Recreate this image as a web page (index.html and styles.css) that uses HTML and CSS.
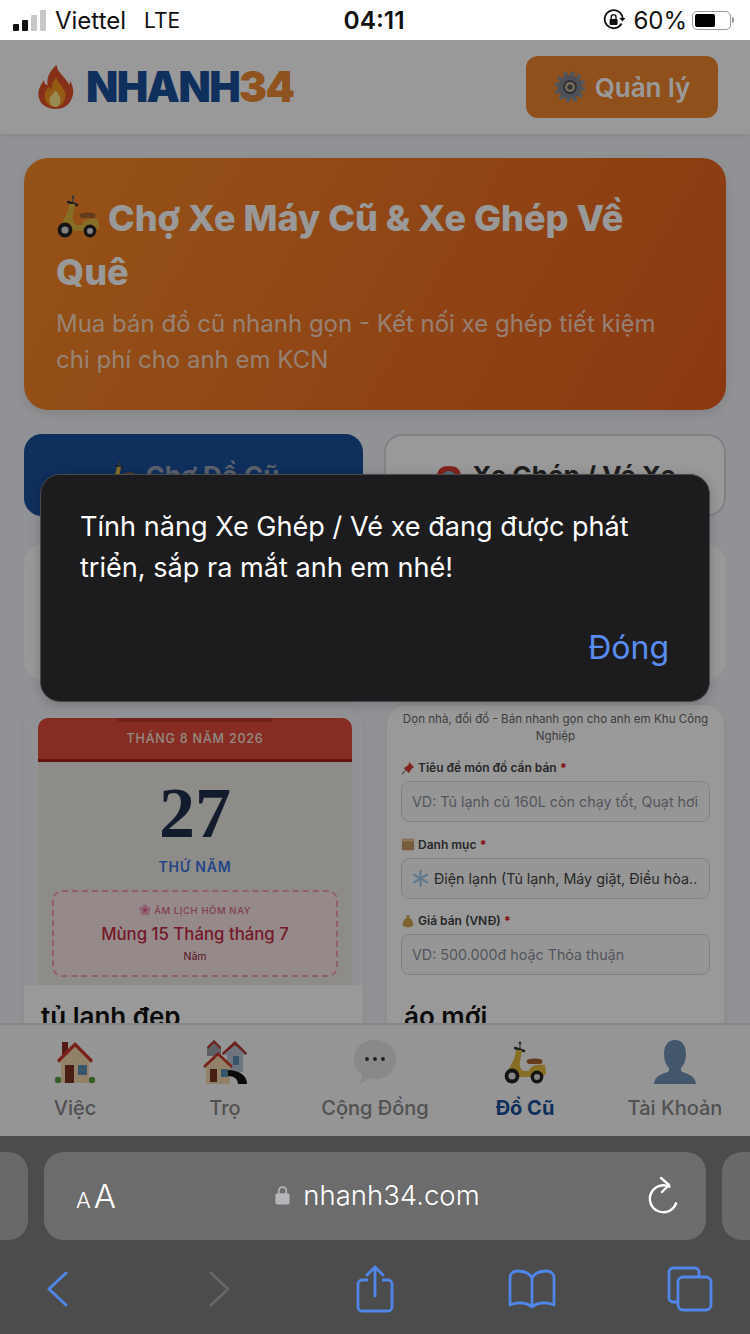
FILE: index.html
```html
<!DOCTYPE html>
<html lang="vi">
<head>
    <meta charset="UTF-8">
    <title>Nhanh34 - Đồ Cũ</title>
    <link rel="stylesheet" href="styles.css">
</head>
<body>
    <svg class="icon-defs" xmlns="http://www.w3.org/2000/svg">
        <symbol id="scooter" viewBox="0 0 44 44">
            <path d="M17 3v6" stroke="#666" stroke-width="1.3"/>
            <circle cx="17" cy="3" r="1.4" fill="#555"/>
            <path d="M12 8l9 3" stroke="#333" stroke-width="2.4" stroke-linecap="round"/>
            <path d="M13 10h6l-2 12c-1 4 1 9 5 9h4c1-4 5-7 16-6l1 9-5 3H14c0-4-2-8-8-8 2-5 6-9 7-19z" fill="#e2b83e"/>
            <path d="M24 20c4-2 12-2 15 0 1 2 0 4-2 4H27c-3 0-4-2-3-4z" fill="#a5622e"/>
            <circle cx="9" cy="36" r="7.4" fill="#222"/>
            <circle cx="9" cy="36" r="3.6" fill="#ddd"/>
            <circle cx="34" cy="37" r="6.4" fill="#222"/>
            <circle cx="34" cy="37" r="3" fill="#ddd"/>
        </symbol>
        <symbol id="house" viewBox="0 0 44 44">
            <rect x="9" y="2" width="6" height="13" fill="#8d2c22"/>
            <rect x="8" y="19" width="28" height="24" fill="#f0d8ae"/>
            <path d="M22 2L4 20l2 3L22 7l16 16 2-3z" fill="#c93a2c"/>
            <path d="M22 7L8 21v4h28v-4z" fill="#f0d8ae"/>
            <rect x="12" y="25" width="9" height="18" fill="#7a3422"/>
            <rect x="25" y="25" width="9" height="10" fill="#5d8fb5"/>
            <circle cx="5" cy="40" r="3.2" fill="#5d9a3c"/>
            <circle cx="39" cy="40" r="3.2" fill="#5d9a3c"/>
        </symbol>
        <symbol id="houses" viewBox="0 0 44 44">
            <path d="M32 1L19 13l1 2h4v17h16V15h3l1-2z" fill="#b9c4d2"/>
            <path d="M32 1L19 13l1 2L32 5l11 10 1-2z" fill="#b5382c"/>
            <rect x="30" y="16" width="6" height="9" fill="#5d8fb5"/>
            <path d="M11 0L4 7v9h14V7z" fill="#9aa0a8"/>
            <path d="M11 0L4 7l1 2 6-6 6 6 1-2z" fill="#b5382c"/>
            <rect x="3" y="22" width="24" height="22" fill="#f0d8ae"/>
            <path d="M15 12L0 26l2 2L15 16l13 12 2-2z" fill="#c93a2c"/>
            <path d="M15 16L3 27v4h24v-4z" fill="#f0d8ae"/>
            <rect x="7" y="29" width="7" height="13" fill="#7a3422"/>
            <rect x="18" y="29" width="7" height="8" fill="#5d8fb5"/>
            <path d="M25 30c10 0 19 5 19 14h-9c0-5-4-8-10-8z" fill="#111"/>
        </symbol>
        <symbol id="bubble" viewBox="0 0 44 44">
            <path d="M22 0c12 0 21 8 21 19 0 12-9 20-21 20-2 0-4 0-6-1-3 3-6 5-10 6 2-3 3-6 3-9C4 31 1 26 1 19 1 8 10 0 22 0z" fill="#e4e4e4"/>
            <circle cx="14" cy="19" r="1.9" fill="#333"/>
            <circle cx="22" cy="19" r="1.9" fill="#333"/>
            <circle cx="30" cy="19" r="1.9" fill="#333"/>
        </symbol>
        <symbol id="person" viewBox="0 0 44 44">
            <path d="M22 0c8 0 11 7 11 14 0 6-2 11-5 14v3c4 3 14 3 15 13H1c1-10 11-10 15-13v-3c-3-3-5-8-5-14C11 7 14 0 22 0z" fill="#6f90b5"/>
        </symbol>
        <symbol id="flower" viewBox="0 0 20 20">
            <circle cx="10" cy="4.5" r="4" fill="#f3a3c4"/>
            <circle cx="15.5" cy="8.5" r="4" fill="#f3a3c4"/>
            <circle cx="13.5" cy="15" r="4" fill="#f3a3c4"/>
            <circle cx="6.5" cy="15" r="4" fill="#f3a3c4"/>
            <circle cx="4.5" cy="8.5" r="4" fill="#f3a3c4"/>
            <circle cx="10" cy="10" r="3" fill="#d9607f"/>
        </symbol>
    </svg>

    <div class="status-bar">
        <div class="status-left">
            <span class="signal">
                <i class="bar on b1"></i><i class="bar on b2"></i><i class="bar b3"></i><i class="bar b4"></i>
            </span>
            <span>Viettel</span>
            <span class="network">LTE</span>
        </div>
        <div class="status-time">04:11</div>
        <div class="status-right">
            <svg class="rotate-lock" viewBox="0 0 22 22" width="22" height="22">
                <path d="M18.6 14.5A9 9 0 1 1 19.6 9" fill="none" stroke="#111" stroke-width="1.8"/>
                <path d="M16.2 9h6.2l-3 3.6z" fill="#111"/>
                <rect x="6.6" y="10" width="8" height="6" rx="1" fill="#111"/>
                <path d="M8.2 10V8a2.4 2.4 0 0 1 4.8 0v2" fill="none" stroke="#111" stroke-width="1.4"/>
            </svg>
            <span>60%</span>
            <span class="battery"><span class="battery-level"></span></span>
        </div>
    </div>

    <div class="webview">
        <header class="site-header">
            <div class="logo">
                <svg class="flame" viewBox="0 0 36 44" width="37" height="44">
                    <path d="M19 0c1 8 9 12 13 20 1-2 0-5 0-5 4 6 5 13 2 19-3 7-9 10-16 10C9 44 2 39 1 31c-1-7 3-11 5-16 1 3 2 5 4 5-1-8 3-15 9-20z" fill="#e2502b"/>
                    <path d="M19 12c1 6 7 10 9 16 1 7-4 14-10 14S7 38 7 31c0-4 3-7 4-10 1 2 2 3 3 3 0-5 2-9 5-12z" fill="#f7941f"/>
                    <path d="M18 25c2 3 5 6 5 10s-2 7-5 7-6-3-6-7 4-6 6-10z" fill="#fde68a"/>
                </svg>
                <span class="logo-text">NHANH<span class="logo-num">34</span></span>
            </div>
            <button class="manage-btn">
                <svg class="gear" viewBox="0 0 32 32" width="32" height="32">
                    <circle cx="16" cy="16" r="13.5" fill="none" stroke="#8a8f98" stroke-width="4" stroke-dasharray="4 3.07"/>
                    <circle cx="16" cy="16" r="12" fill="#80868f"/>
                    <circle cx="16" cy="16" r="7" fill="#4b5058"/>
                    <circle cx="16" cy="16" r="5" fill="#c9b99a"/>
                    <circle cx="16" cy="16" r="2.6" fill="#555"/>
                </svg>
                Quản lý
            </button>
        </header>

        <main class="content">
            <section class="hero">
                <h1 class="hero-title"><svg class="hero-icon"><use href="#scooter"/></svg> Chợ Xe Máy Cũ &amp; Xe Ghép Về Quê</h1>
                <p class="hero-sub">Mua bán đồ cũ nhanh gọn - Kết nối xe ghép tiết kiệm chi phí cho anh em KCN</p>
            </section>

            <div class="mode-tabs">
                <div class="mode-tab active"><svg class="mode-icon"><use href="#scooter"/></svg> Chợ Đồ Cũ</div>
                <div class="mode-tab">
                    <svg class="mode-icon" viewBox="0 -5 24 30">
                        <path d="M0 30V12C0 4 5 1 12 1s12 3 12 11v18z" fill="#d8392f"/>
                        <path d="M5 30V14c0-5 3-8 7-8s7 3 7 8v16z" fill="#7fb0cf"/>
                    </svg>
                    Xe Ghép / Vé Xe
                </div>
            </div>

            <div class="filter-card"></div>

            <div class="product-grid">
                <article class="product-card">
                    <div class="thumb thumb-calendar">
                        <div class="calendar">
                            <div class="cal-head"><span class="cal-clip"></span>THÁNG 8 NĂM 2026</div>
                            <div class="cal-day">27</div>
                            <div class="cal-weekday">THỨ NĂM</div>
                            <div class="lunar">
                                <div class="lunar-label"><svg class="lunar-icon"><use href="#flower"/></svg> ÂM LỊCH HÔM NAY</div>
                                <div class="lunar-date">Mùng 15 Tháng tháng 7</div>
                                <div class="lunar-year">Năm</div>
                            </div>
                        </div>
                    </div>
                    <h3 class="product-title">tủ lạnh đẹp</h3>
                </article>

                <article class="product-card">
                    <div class="thumb thumb-form">
                        <p class="form-intro">Dọn nhà, đổi đồ - Bán nhanh gọn cho anh em Khu Công Nghiệp</p>
                        <div class="form-label">
                            <svg class="label-icon" viewBox="0 0 16 16">
                                <path d="M9 1l6 6-2 1-3 4-1 2-6-6 2-1 4-3z" fill="#d8392f"/>
                                <path d="M5 11l-4 4" stroke="#666" stroke-width="1.2"/>
                            </svg>
                            Tiêu đề món đồ cần bán <b class="req">*</b>
                        </div>
                        <div class="form-input">VD: Tủ lạnh cũ 160L còn chạy tốt, Quạt hơi</div>
                        <div class="form-label">
                            <svg class="label-icon" viewBox="0 0 16 16">
                                <rect x="1" y="2" width="14" height="13" rx="1" fill="#c79a63"/>
                                <rect x="1" y="2" width="14" height="3" fill="#e4c79c"/>
                            </svg>
                            Danh mục <b class="req">*</b>
                        </div>
                        <div class="form-input form-select">
                            <svg class="snow" viewBox="0 0 18 18">
                                <g stroke="#9cc6e8" stroke-width="2.2" stroke-linecap="round">
                                    <path d="M9 1v16"/><path d="M2 5l14 8"/><path d="M16 5L2 13"/>
                                </g>
                            </svg>
                            Điện lạnh (Tủ lạnh, Máy giặt, Điều hòa..
                        </div>
                        <div class="form-label">
                            <svg class="label-icon" viewBox="0 0 16 16">
                                <path d="M6 1h4l-1 3c3 1 5 5 5 8 0 2-2 3-6 3s-6-1-6-3c0-3 2-7 5-8z" fill="#d3a94e"/>
                            </svg>
                            Giá bán (VNĐ) <b class="req">*</b>
                        </div>
                        <div class="form-input">VD: 500.000đ hoặc Thỏa thuận</div>
                    </div>
                    <h3 class="product-title">áo mới</h3>
                </article>
            </div>
        </main>

        <nav class="tab-bar">
            <a class="tab-item"><svg class="tab-icon"><use href="#house"/></svg>Việc</a>
            <a class="tab-item"><svg class="tab-icon"><use href="#houses"/></svg>Trọ</a>
            <a class="tab-item"><svg class="tab-icon"><use href="#bubble"/></svg>Cộng Đồng</a>
            <a class="tab-item active"><svg class="tab-icon"><use href="#scooter"/></svg>Đồ Cũ</a>
            <a class="tab-item"><svg class="tab-icon"><use href="#person"/></svg>Tài Khoản</a>
        </nav>

        <div class="overlay">
            <div class="dialog">
                <p class="dialog-text">Tính năng Xe Ghép / Vé xe đang được phát triển, sắp ra mắt anh em nhé!</p>
                <div class="dialog-actions"><span class="dialog-btn">Đóng</span></div>
            </div>
        </div>
    </div>

    <div class="browser-bar">
        <div class="url-row">
            <div class="url-stub left"></div>
            <div class="url-box">
                <div class="reader"><span class="aa-small">A</span><span class="aa-big">A</span></div>
                <div class="url-text">
                    <svg viewBox="0 0 16 21" width="15" height="20">
                        <path d="M4 9V6a4 4 0 0 1 8 0v3" fill="none" stroke="#b5b5ba" stroke-width="1.8"/>
                        <rect x="0.5" y="8.5" width="15" height="12" rx="2" fill="#b5b5ba"/>
                    </svg>
                    nhanh34.com
                </div>
                <div class="reload">
                    <svg viewBox="0 0 32 38" width="32" height="38">
                        <path d="M19 8.5A13.5 13.5 0 1 0 29.5 23" fill="none" stroke="#fff" stroke-width="2.4" stroke-linecap="round" transform="rotate(14 16 23)"/>
                        <path d="M14 1l8 7-7 7" fill="none" stroke="#fff" stroke-width="2.4" stroke-linecap="round" stroke-linejoin="round"/>
                    </svg>
                </div>
            </div>
            <div class="url-stub right"></div>
        </div>
        <div class="tool-row">
            <svg viewBox="0 0 22 36" width="22" height="36">
                <path d="M20 2L3 18l17 16" fill="none" stroke="#4f86e8" stroke-width="3" stroke-linecap="round" stroke-linejoin="round"/>
            </svg>
            <svg viewBox="0 0 22 36" width="22" height="36">
                <path d="M2 2l17 16L2 34" fill="none" stroke="#666" stroke-width="3" stroke-linecap="round" stroke-linejoin="round"/>
            </svg>
            <svg viewBox="0 0 38 48" width="38" height="48">
                <path d="M12 15H6a4 4 0 0 0-4 4v23a4 4 0 0 0 4 4h26a4 4 0 0 0 4-4V19a4 4 0 0 0-4-4h-6" fill="none" stroke="#4f86e8" stroke-width="2.8"/>
                <path d="M19 31V2M11 10l8-8 8 8" fill="none" stroke="#4f86e8" stroke-width="2.8" stroke-linecap="round" stroke-linejoin="round"/>
            </svg>
            <svg viewBox="0 0 48 40" width="48" height="40">
                <path d="M24 9C21 3 15 2 9 2 5 2 2 5 2 9v27c7-3 16-3 22 2 6-5 15-5 22-2V9c0-4-3-7-7-7-6 0-12 1-15 7zM24 9v29" fill="none" stroke="#4f86e8" stroke-width="2.8" stroke-linejoin="round"/>
            </svg>
            <svg viewBox="0 0 46 46" width="46" height="46">
                <path d="M10 36H6a4 4 0 0 1-4-4V6a4 4 0 0 1 4-4h22a4 4 0 0 1 4 4v4" fill="none" stroke="#4f86e8" stroke-width="2.8"/>
                <rect x="11" y="11" width="33" height="33" rx="5" fill="none" stroke="#4f86e8" stroke-width="2.8"/>
            </svg>
        </div>
    </div>
</body>
</html>
```

FILE: styles.css
```css
* {
    box-sizing: border-box;
}
body {
    margin: 0;
    width: 750px;
    height: 1334px;
    overflow: hidden;
    font-family: Inter, "Liberation Sans", sans-serif;
    background-color: #4c4c4c;
}
.icon-defs {
    display: none;
}

/* status bar */
.status-bar {
    height: 40px;
    padding: 0 15px 0 13px;
    display: grid;
    grid-template-columns: 1fr auto 1fr;
    align-items: center;
    background-color: white;
    color: #111;
    font-size: 24px;
}
.status-left, .status-right {
    display: flex;
    align-items: center;
}
.status-right {
    justify-content: flex-end;
}
.signal {
    display: flex;
    align-items: flex-end;
    gap: 3px;
    height: 21px;
    margin-right: 9px;
}
.bar {
    width: 6px;
    background-color: #c8c8c8;
    border-radius: 1px;
}
.bar.on {
    background-color: #111;
}
.b1 { height: 7px; }
.b2 { height: 11px; }
.b3 { height: 16px; }
.b4 { height: 21px; }
.network {
    margin-left: 18px;
    font-size: 21px;
}
.status-time {
    font-weight: 600;
    font-size: 24.5px;
}
.rotate-lock {
    margin-right: 8px;
}
.battery {
    width: 39px;
    height: 19px;
    margin-left: 5px;
    margin-right: 4px;
    padding: 2px;
    border: 1.5px solid #999;
    border-radius: 5px;
    position: relative;
}
.battery::after {
    content: "";
    position: absolute;
    right: -4px;
    top: 5px;
    width: 2px;
    height: 6px;
    background-color: #999;
    border-radius: 0 2px 2px 0;
}
.battery-level {
    display: block;
    width: 60%;
    height: 100%;
    background-color: #000;
    border-radius: 2px;
}

/* web page */
.webview {
    position: relative;
    height: 1096px;
    display: flex;
    flex-direction: column;
    overflow: hidden;
    background-color: #f1f4f8;
}
.site-header {
    height: 94px;
    flex: none;
    padding: 16px 32px 16px 37px;
    display: flex;
    align-items: center;
    justify-content: space-between;
    background-color: white;
    box-shadow: 0 2px 4px rgba(0,0,0,0.06);
}
.logo {
    display: flex;
    align-items: center;
    gap: 12px;
}
.logo-text {
    margin-top: -2px;
    font-size: 42px;
    font-weight: 900;
    letter-spacing: -1.6px;
    color: #1a4f9c;
}
.logo-num {
    color: #ee8a35;
}
.manage-btn {
    width: 192px;
    height: 62px;
    display: flex;
    align-items: center;
    justify-content: center;
    gap: 9px;
    border: none;
    border-radius: 12px;
    background-color: #f18630;
    color: white;
    font-family: inherit;
    font-size: 26px;
    font-weight: 600;
}
.content {
    flex: 1;
    min-height: 0;
    overflow: hidden;
    padding: 24px;
}
.hero {
    height: 252px;
    padding: 33px 32px;
    border-radius: 24px;
    background: linear-gradient(120deg, #f98a28 0%, #e85f1e 100%);
    color: white;
    box-shadow: 0 4px 12px rgba(0,0,0,0.1);
}
.hero-title {
    margin: 0;
    font-size: 36px;
    font-weight: 800;
    line-height: 54px;
}
.hero-icon {
    width: 44px;
    height: 44px;
    vertical-align: -7px;
}
.hero-sub {
    margin: 7px 0 0;
    font-size: 24px;
    line-height: 36px;
    color: rgba(255,255,255,0.72);
}
.mode-tabs {
    margin-top: 24px;
    display: grid;
    grid-template-columns: 339px 1fr;
    gap: 21px;
}
.mode-tab {
    height: 82px;
    display: flex;
    align-items: center;
    justify-content: center;
    gap: 8px;
    border-radius: 18px;
    background-color: #1a4f9c;
    color: #9aa4b5;
    font-size: 26px;
    font-weight: 700;
}
.mode-tab + .mode-tab {
    background-color: white;
    color: #333;
    border: 2px solid #d6dae0;
}
.mode-icon {
    width: 30px;
    height: 30px;
}
.filter-card {
    height: 136px;
    margin-top: 28px;
    border-radius: 20px;
    background-color: white;
}
.product-grid {
    margin-top: 25px;
    display: grid;
    grid-template-columns: 339px 337px;
    gap: 24px;
}
.product-card {
    height: 420px;
    border-radius: 20px;
    overflow: hidden;
    background-color: white;
    box-shadow: 0 2px 8px rgba(0,0,0,0.08);
}
.thumb {
    height: 280px;
}
.thumb-calendar {
    padding: 13px 11px 0 14px;
    background-color: #f1f4f8;
}
.product-title {
    margin: 0;
    padding: 15px 17px;
    font-size: 26px;
    font-weight: 600;
    line-height: 34px;
    color: #111;
}

/* calendar picture */
.calendar {
    height: 100%;
    border-radius: 10px 10px 0 0;
    overflow: hidden;
    text-align: center;
    background-color: #ebe9e4;
}
.cal-head {
    position: relative;
    height: 44px;
    line-height: 42px;
    background-color: #e24a3a;
    border-bottom: 3px solid #a8201a;
    color: #f3e4dc;
    font-size: 12.5px;
    font-weight: 500;
    letter-spacing: 0.8px;
}
.cal-clip {
    position: absolute;
    left: 79px;
    top: 0;
    width: 156px;
    height: 4px;
    background-color: #bd3b2e;
    border-radius: 0 0 4px 4px;
}
.cal-day {
    margin-top: 14px;
    font-family: "Liberation Serif", serif;
    font-size: 72px;
    font-weight: 700;
    line-height: 75px;
    color: #1e2f4a;
}
.cal-weekday {
    margin-top: 7px;
    font-size: 14px;
    font-weight: 600;
    letter-spacing: 0.8px;
    color: #3f74e0;
}
.lunar {
    height: 87px;
    margin: 15px 14px 0;
    padding-top: 12px;
    border: 2px dashed #f2a0a8;
    border-radius: 10px;
    background-color: #f8e4e4;
}
.lunar-label {
    font-size: 9.5px;
    font-weight: 500;
    letter-spacing: 0.6px;
    color: #d86a86;
}
.lunar-icon {
    width: 12px;
    height: 12px;
    vertical-align: -2px;
}
.lunar-date {
    margin-top: 8px;
    font-size: 16.8px;
    font-weight: 500;
    color: #c22a45;
}
.lunar-year {
    margin-top: 6px;
    font-size: 10.5px;
    color: #96203a;
}

/* form picture */
.thumb-form {
    padding: 6px 14px 0;
}
.form-intro {
    margin: 0 0 14px;
    text-align: center;
    font-size: 11.6px;
    line-height: 17px;
    color: #666;
}
.form-label {
    display: flex;
    align-items: center;
    gap: 3px;
    height: 17px;
    font-size: 12px;
    font-weight: 600;
    color: #444;
}
.label-icon {
    width: 14px;
    height: 14px;
}
.req {
    color: #e02424;
}
.form-input {
    height: 41px;
    margin: 5px 0 13.5px;
    padding: 0 10px;
    display: flex;
    align-items: center;
    border: 1px solid #d6d9de;
    border-radius: 8px;
    background-color: #fbfbfc;
    font-size: 14.3px;
    color: #8b8f98;
    white-space: nowrap;
    overflow: hidden;
}
.form-select {
    color: #444;
    gap: 5px;
}
.snow {
    width: 17px;
    height: 17px;
    flex: none;
}

/* tab bar */
.tab-bar {
    height: 113px;
    flex: none;
    display: grid;
    grid-template-columns: repeat(5, 1fr);
    padding-top: 15px;
    background-color: #f8f8f8;
    border-top: 2px solid #e0e0e0;
}
.tab-item {
    display: flex;
    flex-direction: column;
    align-items: center;
    gap: 12px;
    font-size: 20px;
    font-weight: 500;
    color: #888;
}
.tab-item.active {
    color: #1a4f9c;
    font-weight: 700;
}
.tab-icon {
    width: 44px;
    height: 44px;
}

/* alert */
.overlay {
    position: absolute;
    top: 0;
    left: 0;
    right: 0;
    bottom: 0;
    display: flex;
    align-items: center;
    justify-content: center;
    background-color: rgba(0,0,0,0.4);
}
.dialog {
    width: 670px;
    height: 228px;
    padding: 31px 40px 33px 39px;
    border: 1px solid #4a4a4c;
    border-radius: 20px;
    background-color: #1c1c1e;
    box-shadow: 0 2px 12px rgba(0,0,0,0.2);
}
.dialog-text {
    margin: 0;
    font-size: 27.1px;
    line-height: 41px;
    color: white;
}
.dialog-actions {
    margin-top: 40px;
    text-align: right;
}
.dialog-btn {
    font-size: 32px;
    line-height: 40px;
    color: #5a8df2;
}

/* safari toolbar */
.browser-bar {
    height: 198px;
    padding-top: 16px;
    background-color: #4c4c4c;
}
.url-row {
    display: flex;
    gap: 16px;
    height: 88px;
}
.url-stub {
    width: 28px;
    background-color: #696969;
}
.url-stub.left {
    border-radius: 0 20px 20px 0;
}
.url-stub.right {
    border-radius: 20px 0 0 20px;
}
.url-box {
    flex: 1;
    display: grid;
    grid-template-columns: 1fr auto 1fr;
    align-items: center;
    padding: 0 27px 0 32px;
    border-radius: 20px;
    background-color: #6b6c6b;
    color: white;
}
.reader {
    display: flex;
    align-items: baseline;
    gap: 3px;
    font-weight: 300;
}
.aa-small {
    font-size: 22px;
}
.aa-big {
    font-size: 33px;
}
.url-text {
    display: flex;
    align-items: center;
    gap: 13px;
    margin-top: -2px;
    font-size: 27.5px;
    font-weight: 300;
}
.reload {
    display: flex;
    justify-content: flex-end;
}
.tool-row {
    height: 90px;
    margin-top: 4px;
    display: grid;
    grid-template-columns: 114px 212px 98px 216px 100px;
    justify-items: center;
    align-items: center;
}
```
